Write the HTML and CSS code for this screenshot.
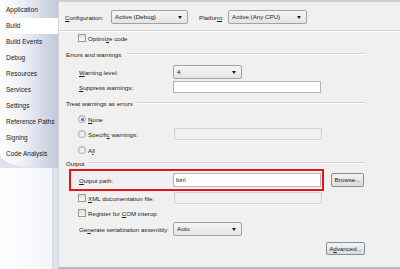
FILE: index.html
```html
<!DOCTYPE html>
<html lang="en">
  <head>
    <meta charset="UTF-8">
    <title>Build</title>
    <link rel="stylesheet" href="styles.css">
  </head>
  <body>
    <div class="window">
      <div class="sidebar">
        <div class="tabs">
          <div class="tab">Application</div>
          <div class="tab active">Build</div>
          <div class="tab">Build Events</div>
          <div class="tab">Debug</div>
          <div class="tab">Resources</div>
          <div class="tab">Services</div>
          <div class="tab">Settings</div>
          <div class="tab">Reference Paths</div>
          <div class="tab">Signing</div>
          <div class="tab">Code Analysis</div>
        </div>
        <div class="sidebar-rest"></div>
      </div>

      <div class="main">
        <div class="config-row">
          <span class="config-label"><u>C</u>onfiguration:</span>
          <div class="select config-select">Active (Debug)</div>
          <span class="platform-label">Platfor<u>m</u>:</span>
          <div class="select platform-select">Active (Any CPU)</div>
        </div>
        <div class="separator"></div>

        <div class="row check-row r-optimize">
          <span class="checkbox"></span>
          <span>Optimi<u>z</u>e code</span>
        </div>

        <div class="group-header r-errors">Errors and warnings</div>
        <div class="row field-row r-warning">
          <span class="field-label"><u>W</u>arning level:</span>
          <div class="select small-select">4</div>
        </div>
        <div class="row field-row r-suppress">
          <span class="field-label"><u>S</u>uppress warnings:</span>
          <div class="textbox"></div>
        </div>

        <div class="group-header r-treat">Treat warnings as errors</div>
        <div class="row check-row r-none">
          <span class="radio checked"></span>
          <span><u>N</u>one</span>
        </div>
        <div class="row check-row field-row r-specific">
          <span class="radio"></span>
          <span class="radio-label">Specifi<u>c</u> warnings:</span>
          <div class="textbox disabled"></div>
        </div>
        <div class="row check-row r-all">
          <span class="radio"></span>
          <span>A<u>l</u>l</span>
        </div>

        <div class="group-header r-output">Output</div>
        <div class="output-row">
          <div class="highlight">
            <span class="field-label"><u>O</u>utput path:</span>
            <div class="textbox path">bin\</div>
          </div>
          <div class="button browse">Browse...</div>
        </div>
        <div class="row check-row field-row r-xml">
          <span class="checkbox"></span>
          <span class="radio-label"><u>X</u>ML documentation file:</span>
          <div class="textbox disabled"></div>
        </div>
        <div class="row check-row r-com">
          <span class="checkbox"></span>
          <span>Register for <u>C</u>OM interop</span>
        </div>
        <div class="row field-row r-generate">
          <span class="field-label">Ge<u>n</u>erate serialization assembly:</span>
          <div class="select small-select">Auto</div>
        </div>
        <div class="advanced-row">
          <div class="button advanced">A<u>d</u>vanced...</div>
        </div>
      </div>
    </div>
  </body>
</html>
```

FILE: styles.css
```css
body {
  margin: 0;
  background: #f0f0f0;
  font-family: "Liberation Sans", Arial, sans-serif;
  font-size: 6.2px;
  color: #1a1a1a;
}
u {
  text-decoration: underline;
}
.window {
  display: flex;
  width: 400px;
  height: 269px;
  overflow: hidden;
}

/* left tab strip */
.sidebar {
  width: 58px;
  flex-shrink: 0;
  display: flex;
  flex-direction: column;
  background: #dfe2ea;
}
.tabs {
  padding-top: 2px;
  background: linear-gradient(to right, #ffffff 0%, #eef0f6 40%, #d0d5e3 80%, #c2c8da 100%);
  border-bottom-left-radius: 40px 14px;
}
.tab {
  height: 16px;
  line-height: 16px;
  padding-left: 6px;
  font-size: 6.5px;
  white-space: nowrap;
}
.tab.active {
  background: #ffffff;
}
.tabs .tab:last-child {
  height: 22px;
  line-height: 12px;
  padding-top: 2px;
  box-sizing: border-box;
}
.sidebar-rest {
  flex: 1;
  margin-right: 5px;
  background: linear-gradient(to right, #ffffff, #f3f5fa);
  border-right: 1px solid #d2d6e2;
}

/* right panel */
.main {
  flex: 1;
  border-top: 2px solid #cfcfcf;
  border-bottom: 2px solid #b9b9b9;
  border-left: 1px solid #d6d6d6;
  padding-right: 35px;
  box-sizing: border-box;
  white-space: nowrap;
}
.config-row {
  display: flex;
  align-items: center;
  height: 14px;
  margin-top: 8px;
  padding-left: 6px;
}
.config-label {
  width: 46px;
}
.config-select {
  width: 77px;
}
.platform-label {
  margin-left: 11px;
  width: 29px;
}
.platform-select {
  width: 79px;
}
.separator {
  margin-top: 6px;
  margin-right: -35px;
  height: 1px;
  background: #d5d5d5;
  border-bottom: 1px solid #ffffff;
}
.row {
  display: flex;
  align-items: center;
  height: 12px;
  padding-left: 20px;
}
.check-row {
  padding-left: 19px;
}
.field-row {
  height: 14px;
}
.field-label {
  width: 94px;
  flex-shrink: 0;
}
.radio-label {
  width: 86px;
  flex-shrink: 0;
}
.checkbox {
  width: 6px;
  height: 6px;
  border: 1px solid #9a9a9a;
  background: linear-gradient(#dcdcdc, #f8f8f8);
  margin-right: 2px;
}
.radio {
  width: 6px;
  height: 6px;
  border: 1px solid #a6a6a6;
  border-radius: 50%;
  background: linear-gradient(#e2e2e2, #fafafa);
  margin-right: 2px;
  position: relative;
}
.radio.checked::after {
  content: "";
  position: absolute;
  left: 1.5px;
  top: 1.5px;
  width: 3px;
  height: 3px;
  border-radius: 50%;
  background: #2a6fd0;
}
.group-header {
  display: flex;
  align-items: center;
  height: 12px;
  padding-left: 7px;
}
.group-header::after {
  content: "";
  flex: 1;
  height: 1px;
  margin-left: 4px;
  background: #d5d5d5;
  border-bottom: 1px solid #ffffff;
}
.select {
  height: 14px;
  box-sizing: border-box;
  border: 1px solid #a3a3a3;
  border-radius: 2px;
  background: linear-gradient(#f6f6f6, #e4e4e4);
  padding-left: 3px;
  line-height: 12px;
  position: relative;
}
.select::after {
  content: "";
  position: absolute;
  right: 5px;
  top: 5px;
  border-left: 2px solid transparent;
  border-right: 2px solid transparent;
  border-top: 3px solid #1e1e1e;
}
.small-select {
  width: 69px;
}
.textbox {
  width: 148px;
  height: 12px;
  box-sizing: border-box;
  border: 1px solid #b3b3b3;
  background: #ffffff;
  padding-left: 2px;
  line-height: 10px;
}
.textbox.disabled {
  background: #f0f0f0;
  border-color: #d4d4d4;
}
.textbox.path {
  height: 14px;
  line-height: 12px;
}
.r-errors { margin-top: 4px; }
.r-warning { margin-top: 5px; }
.r-suppress { margin-top: 1px; }
.r-treat { margin-top: 3px; }
.r-none { margin-top: 4px; }
.r-specific { margin-top: 2px; }
.r-all { margin-top: 3px; }
.r-output { margin-top: 1px; }
.output-row {
  display: flex;
  align-items: center;
}
.highlight {
  display: flex;
  align-items: center;
  width: 255px;
  height: 22px;
  box-sizing: border-box;
  margin-left: 10px;
  padding-left: 8px;
  border: 2px solid #e3141c;
}
.button {
  height: 14px;
  box-sizing: border-box;
  border: 1px solid #8c8c8c;
  border-radius: 2px;
  background: linear-gradient(#f4f4f4, #dcdcdc);
  text-align: center;
  line-height: 12px;
}
.browse {
  width: 33px;
  margin-left: 7px;
}
.r-xml { margin-top: 1px; height: 12px; }
.r-com { margin-top: 3px; }
.r-generate { margin-top: 3px; }
.advanced-row {
  display: flex;
  justify-content: flex-end;
  margin-top: 6px;
}
.advanced {
  width: 39px;
  height: 13px;
}
```
